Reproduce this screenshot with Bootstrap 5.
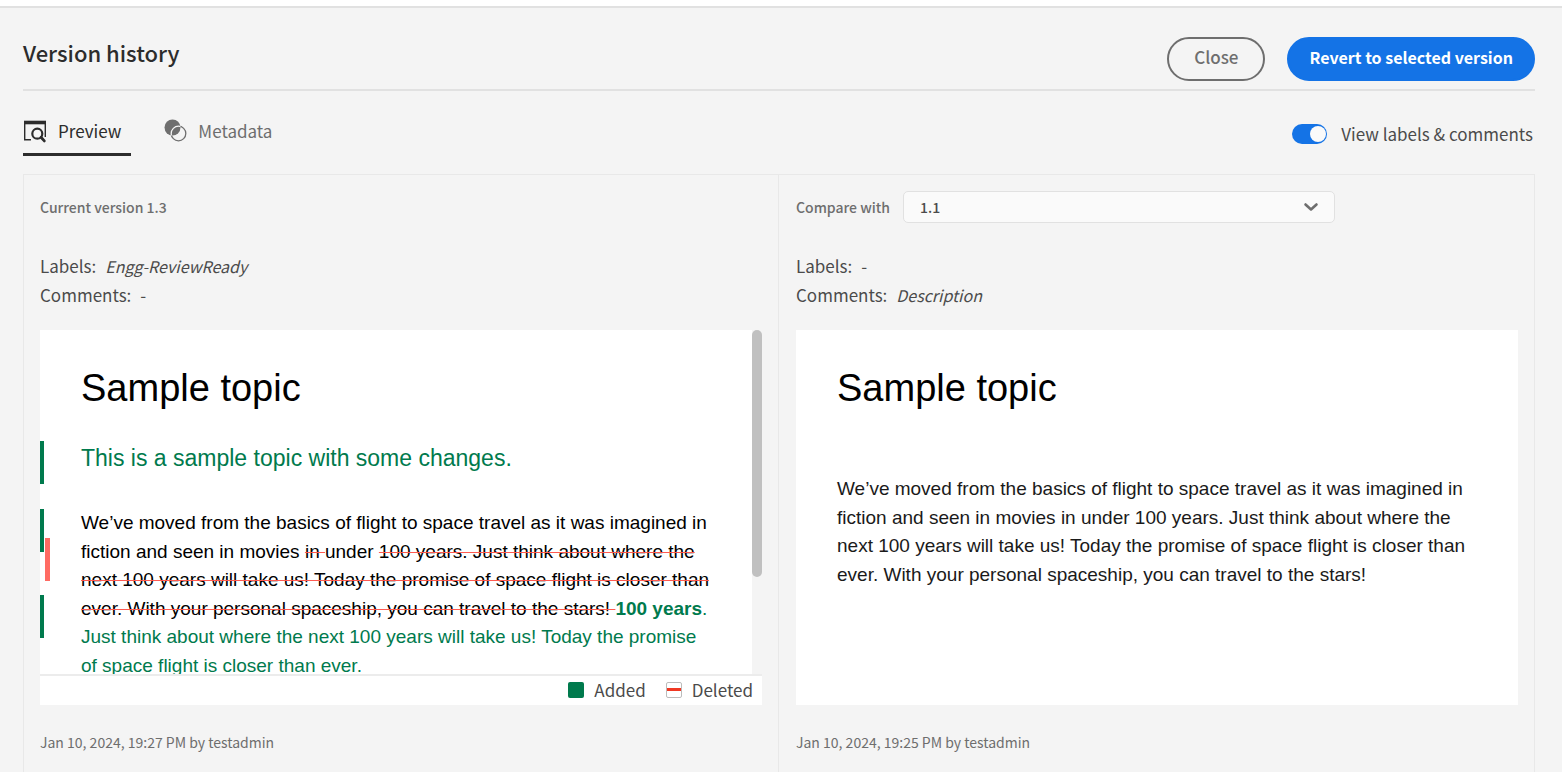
<!DOCTYPE html>
<html lang="en">
<head>
<meta charset="utf-8">
<meta name="viewport" content="width=device-width, initial-scale=1">
<title>Version history</title>
<link href="https://cdn.jsdelivr.net/npm/bootstrap@5.3.0/dist/css/bootstrap.min.css" rel="stylesheet">
<style>
  body { background: #f4f4f4; color: #4b4b4b; font-family: "Noto Sans CJK SC", "Open Sans", sans-serif; font-size: 17px; line-height: 28px; }
  .topbar { height: 8px; background: #fff; border-bottom: 2px solid #e1e1e1; }
  .page { padding: 0 27px 0 23px; }
  .page-head { height: 83px; padding-top: 29px; border-bottom: 2px solid #e1e1e1; }
  .page-head h1 { font-size: 22px; line-height: 30px; font-weight: 500; color: #2c2c2c; }
  .page-actions { gap: 22px; }
  .btn-pill { height: 44px; padding: 0 25px 4px; border: 2px solid #6e6e6e; border-radius: 22px; font-size: 17px; line-height: 36px; font-weight: 500; color: #6e6e6e; }
  .btn-cta { padding: 0 20px 4px; background: #1473e6; border-color: #1473e6; color: #fff; font-size: 16px; font-weight: 700; }
  .btn-cta:hover { background: #0d66d0; border-color: #0d66d0; color: #fff; }
  .toolbar { padding-top: 25px; height: 83px; }
  .view-tabs { gap: 32px; }
  .view-tabs .nav-link { height: 40px; padding: 0 10px 8px 0; color: #6e6e6e; border-bottom: 3px solid transparent; gap: 11px; }
  .view-tabs .nav-link.active { color: #2c2c2c; border-color: #2c2c2c; }
  .view-switch { min-height: 0; gap: 14px; padding: 4px 2px 0 0; }
  .view-switch .form-check-input { width: 35px; height: 20px; margin: 0; border: 0; background-color: #1473e6; background-size: 20px 20px;
    background-image: url("data:image/svg+xml,%3Csvg xmlns='http://www.w3.org/2000/svg' viewBox='0 0 20 20'%3E%3Ccircle cx='11' cy='10' r='8' fill='%23fafafa'/%3E%3C/svg%3E"); }
  .versions { border: 1px solid #e8e8e8; border-bottom: 0; }
  .version { padding: 16px; }
  .version:first-child { border-right: 1px solid #e8e8e8; }
  .version + .version { padding-left: 17px; }
  .version-title { height: 32px; gap: 13px; font-size: 14px; font-weight: 500; color: #6e6e6e; }
  .version-title .form-select { width: 432px; height: 32px; padding: 0 16px; border-color: #e1e1e1; border-radius: 5px; background-color: #fafafa; font-size: 14px; font-weight: 500; line-height: 30px; color: #4b4b4b; background-position: right 15px center; background-size: 16px 16px;
    background-image: url("data:image/svg+xml,%3Csvg xmlns='http://www.w3.org/2000/svg' viewBox='0 0 16 16'%3E%3Cpath d='M2.5 5.5L8 10.5L13.5 5.5' fill='none' stroke='%236e6e6e' stroke-width='2.6' stroke-linecap='round' stroke-linejoin='round'/%3E%3C/svg%3E"); }
  .facts { margin: 29px 0 20px; }
  .facts > div { height: 29px; gap: 9px; }
  .facts dt { font-weight: 400; }
  .facts dd { margin: 0; }
  .facts em { font-size: 16px; }
  .preview { height: 375px; background: #fff; }
  .sheet { padding: 34px 41px 0; color: #000; font-family: "Liberation Sans", Arial, sans-serif; }
  .sheet h2 { font-size: 38px; line-height: 48px; font-weight: 400; margin: 0; }
  .sheet .intro { font-size: 23px; line-height: 34px; margin: 29px 0 34px; }
  .sheet .story { font-size: 19px; line-height: 1.5; margin: 0; }
  .sheet-plain .story { margin-top: 63px; color: #1a1a1a; }
  .sheet ins { color: #007a4d; text-decoration: none; }
  .sheet del { text-decoration: line-through 1px #ff5a50; }
  .change-bar { left: -41px; width: 4px; height: 43px; background: #007a4d; }
  .change-bar.removed { left: -36px; width: 5px; background: #ff6b63; }
  .track { flex: 0 0 10px; background: #f4f4f4; }
  .thumb { height: 247px; border-radius: 5px; background: #c0c0c0; }
  .legend-row { height: 31px; border-top: 2px solid #ececec; padding: 0 9px 2px 0; gap: 20px; }
  .key { gap: 10px; }
  .swatch { width: 16px; height: 16px; border-radius: 2px; }
  .swatch.added { background: #007a4d; }
  .swatch.gone { border: 1px solid #bcbcbc; background: #fff; }
  .swatch.gone::before { content: ""; width: 14px; height: 3px; background: #f03823; }
  .stamp { margin: 23px 0 0; font-size: 14px; color: #6e6e6e; }
</style>
</head>
<body class="d-flex flex-column min-vh-100">
<div class="topbar"></div>
<main class="page d-flex flex-column flex-fill">
  <header class="page-head d-flex justify-content-between align-items-start">
    <h1 class="m-0">Version history</h1>
    <div class="page-actions d-flex">
      <button type="button" class="btn btn-pill">Close</button>
      <button type="button" class="btn btn-pill btn-cta">Revert to selected version</button>
    </div>
  </header>

  <div class="toolbar d-flex justify-content-between align-items-start">
    <nav class="nav view-tabs">
      <a class="nav-link active d-flex align-items-center" aria-current="page" href="#preview">
        <svg width="24" height="24" viewBox="0 0 24 24" fill="none" stroke="currentColor" aria-hidden="true"><path d="M1 3.5h22" stroke-width="3.6"/><path d="M1.7 4v16.8H8M22.3 4v14" stroke-width="1.4"/><circle cx="14.3" cy="14.7" r="5" stroke-width="2.2"/><path d="M18 18.3l3.3 3.6" stroke-width="2.8" stroke-linecap="round"/></svg>
        Preview
      </a>
      <a class="nav-link d-flex align-items-center" href="#metadata">
        <svg width="24" height="23" viewBox="0 0 24 23" fill="none" aria-hidden="true"><clipPath id="disc"><circle cx="9.5" cy="8.5" r="8.2"/></clipPath><circle cx="15.5" cy="14.5" r="7.3" stroke="#6e6e6e" stroke-width="1.3"/><circle cx="9.5" cy="8.5" r="8" fill="#6e6e6e"/><circle cx="15.5" cy="14.5" r="7.3" stroke="#f4f4f4" stroke-width="1.3" clip-path="url(#disc)"/></svg>
        Metadata
      </a>
    </nav>
    <div class="form-check form-switch view-switch d-flex align-items-center m-0">
      <input class="form-check-input float-none" type="checkbox" role="switch" id="showLabels" checked>
      <label class="form-check-label" for="showLabels">View labels &amp; comments</label>
    </div>
  </div>

  <div class="versions row g-0 flex-fill" id="preview">
    <section class="version col-6">
      <div class="version-title d-flex align-items-center">Current version 1.3</div>
      <dl class="facts">
        <div class="d-flex"><dt>Labels:</dt><dd><em>Engg-ReviewReady</em></dd></div>
        <div class="d-flex"><dt>Comments:</dt><dd>-</dd></div>
      </dl>
      <div class="preview d-flex flex-column">
        <div class="d-flex flex-fill overflow-hidden">
          <article class="sheet flex-fill">
            <h2>Sample topic</h2>
            <p class="intro position-relative"><span class="change-bar position-absolute"></span><ins>This is a sample topic with some changes.</ins></p>
            <p class="story position-relative"><span class="change-bar position-absolute" style="top:0"></span><span class="change-bar removed position-absolute" style="top:1.5em"></span><span class="change-bar position-absolute" style="top:4.5em"></span>We’ve moved from the basics of flight to space travel as it was imagined in fiction and seen in movies <del>in </del>under <del>100 years. Just think about where the next 100 years will take us! Today the promise of space flight is closer than ever. With your personal spaceship, you can travel to the stars! </del><ins><strong>100 years</strong>. Just think about where the next 100 years will take us! Today the promise of space flight is closer than ever.</ins></p>
          </article>
          <div class="track"><div class="thumb"></div></div>
        </div>
        <div class="legend-row d-flex align-items-center justify-content-end">
          <span class="key d-flex align-items-center"><span class="swatch added"></span>Added</span>
          <span class="key d-flex align-items-center"><span class="swatch gone d-flex align-items-center"></span>Deleted</span>
        </div>
      </div>
      <p class="stamp">Jan 10, 2024, 19:27 PM by testadmin</p>
    </section>

    <section class="version col-6">
      <div class="version-title d-flex align-items-center">
        <label for="compareWith">Compare with</label>
        <select class="form-select" id="compareWith"><option>1.1</option></select>
      </div>
      <dl class="facts">
        <div class="d-flex"><dt>Labels:</dt><dd>-</dd></div>
        <div class="d-flex"><dt>Comments:</dt><dd><em>Description</em></dd></div>
      </dl>
      <div class="preview">
        <article class="sheet sheet-plain">
          <h2>Sample topic</h2>
          <p class="story">We’ve moved from the basics of flight to space travel as it was imagined in fiction and seen in movies in under 100 years. Just think about where the next 100 years will take us! Today the promise of space flight is closer than ever. With your personal spaceship, you can travel to the stars!</p>
        </article>
      </div>
      <p class="stamp">Jan 10, 2024, 19:25 PM by testadmin</p>
    </section>
  </div>
</main>
<script src="https://cdn.jsdelivr.net/npm/bootstrap@5.3.0/dist/js/bootstrap.bundle.min.js"></script>
</body>
</html>
